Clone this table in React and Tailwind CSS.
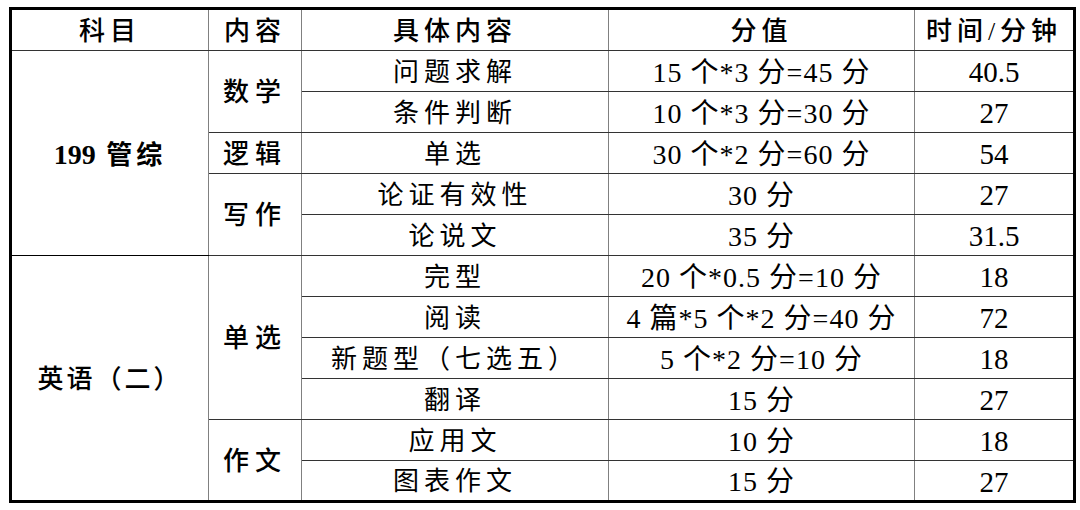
import React from "react";

const rows = [
  { detail: "问题求解", score: "15 个*3 分=45 分", time: "40.5" },
  { detail: "条件判断", score: "10 个*3 分=30 分", time: "27" },
  { detail: "单选", score: "30 个*2 分=60 分", time: "54" },
  { detail: "论证有效性", score: "30 分", time: "27" },
  { detail: "论说文", score: "35 分", time: "31.5" },
  { detail: "完型", score: "20 个*0.5 分=10 分", time: "18" },
  { detail: "阅读", score: "4 篇*5 个*2 分=40 分", time: "72" },
  { detail: "新题型（七选五）", score: "5 个*2 分=10 分", time: "18" },
  { detail: "翻译", score: "15 分", time: "27" },
  { detail: "应用文", score: "10 分", time: "18" },
  { detail: "图表作文", score: "15 分", time: "27" },
];

// rowspans for the first two columns, keyed by row index
const parts = {
  0: { text: "数学", span: 2 },
  2: { text: "逻辑", span: 1 },
  3: { text: "写作", span: 2 },
  5: { text: "单选", span: 4 },
  9: { text: "作文", span: 2 },
};

const cell = "border-x border-x-[#808080] border-y border-y-[#333] text-center align-middle p-0 pt-[3px]";

export default function App() {
  return (
    <div
      className="w-[1080px] h-[510px] bg-white pt-[7px] pl-[9px] text-black"
      style={{ fontFamily: "'Liberation Serif', 'Noto Sans CJK SC', serif" }}
    >
      <table className="w-[1064px] table-fixed border-collapse border-[3px] border-black text-[26px] leading-none">
        <colgroup>
          <col className="w-[198px]" />
          <col className="w-[93px]" />
          <col className="w-[307px]" />
          <col className="w-[306px]" />
          <col className="w-[160px]" />
        </colgroup>
        <thead>
          <tr className="h-[42px]">
            {["科目", "内容", "具体内容", "分值", "时间/分钟"].map((h) => (
              <th key={h} className={`${cell} font-medium tracking-[5px]`}>
                {h}
              </th>
            ))}
          </tr>
        </thead>
        <tbody>
          {rows.map((r, i) => (
            <tr key={i} className="h-[41px]">
              {i === 0 && (
                <td rowSpan={5} className={`${cell} border-y-black font-bold`}>
                  <span className="text-[28px]">199</span>
                  <span className="tracking-[4px]"> 管综</span>
                </td>
              )}
              {i === 5 && (
                <td rowSpan={6} className={`${cell} border-y-black font-medium tracking-[3px]`}>
                  英语（二）
                </td>
              )}
              {parts[i] && (
                <td rowSpan={parts[i].span} className={`${cell} font-medium tracking-[6px]`}>
                  {parts[i].text}
                </td>
              )}
              <td className={`${cell} tracking-[5px]`}>{r.detail}</td>
              <td className={`${cell} text-[28px] tracking-[1px]`}>{r.score}</td>
              <td className={`${cell} text-[29px]`}>{r.time}</td>
            </tr>
          ))}
        </tbody>
      </table>
    </div>
  );
}
